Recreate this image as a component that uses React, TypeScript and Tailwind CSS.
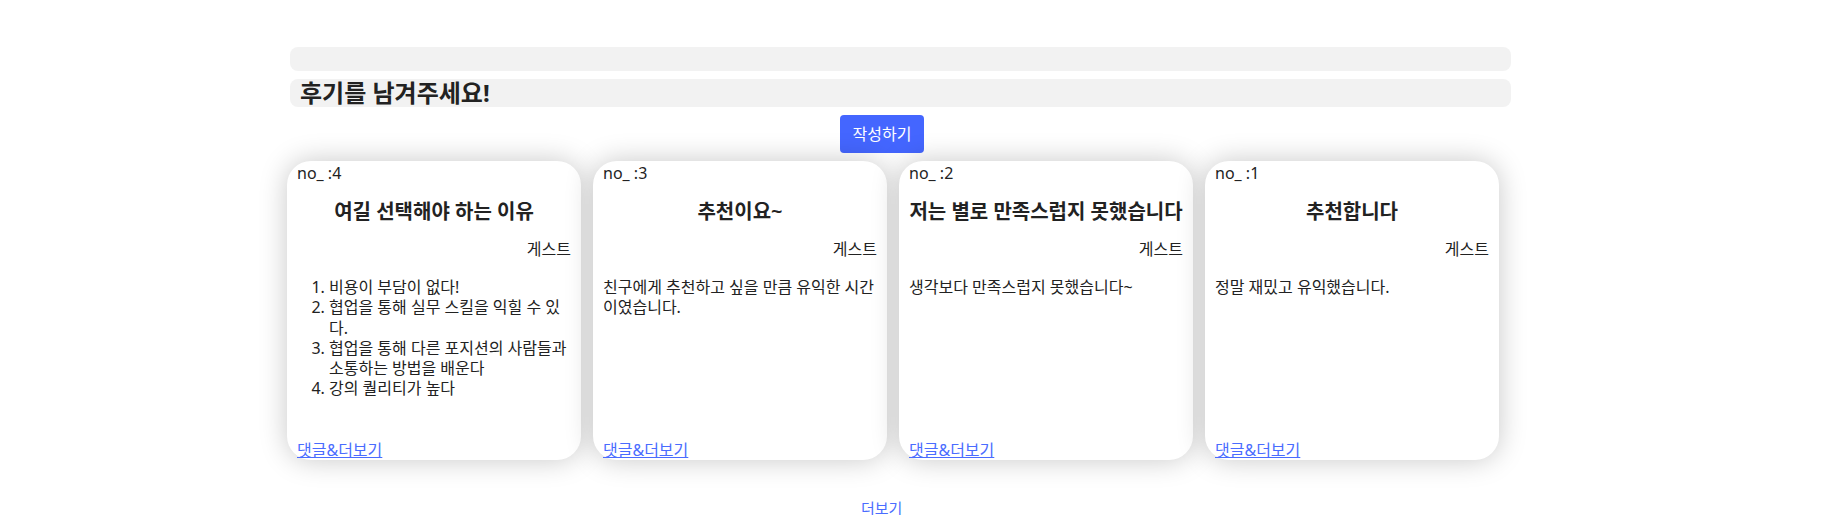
import React from 'react';

type Review = {
  no: number;
  title: string;
  author: string;
  body?: string;
  list?: string[];
};

const reviews: Review[] = [
  {
    no: 4,
    title: '여길 선택해야 하는 이유',
    author: '게스트',
    list: [
      '비용이 부담이 없다!',
      '협업을 통해 실무 스킬을 익힐 수 있다.',
      '협업을 통해 다른 포지션의 사람들과 소통하는 방법을 배운다',
      '강의 퀄리티가 높다',
    ],
  },
  { no: 3, title: '추천이요~', author: '게스트', body: '친구에게 추천하고 싶을 만큼 유익한 시간이였습니다.' },
  { no: 2, title: '저는 별로 만족스럽지 못했습니다', author: '게스트', body: '생각보다 만족스럽지 못했습니다~' },
  { no: 1, title: '추천합니다', author: '게스트', body: '정말 재밌고 유익했습니다.' },
];

function ReviewCard({ review }: { review: Review }) {
  return (
    <div className="flex h-[299px] w-[294px] flex-col rounded-[24px] bg-white px-[10px] pt-[2px] shadow-[0_0_28px_rgba(0,0,0,0.22)]">
      <div className="text-[16px] leading-[20px]">no_ :{review.no}</div>
      <h3 className="mt-[15px] text-center text-[20px] font-semibold leading-[28px] whitespace-nowrap">
        {review.title}
      </h3>
      <div className="mt-[13px] text-right text-[16px] leading-[20px]">{review.author}</div>
      {review.list ? (
        <ol className="mt-[18px] list-decimal pl-[32px] text-[16px] leading-[20.3px]">
          {review.list.map((item) => (
            <li key={item}>{item}</li>
          ))}
        </ol>
      ) : (
        <p className="mt-[18px] text-[16px] leading-[20.3px]">{review.body}</p>
      )}
      <a href="#" className="mt-auto text-[16px] leading-[20px] text-[#4a6cff] underline">
        댓글&더보기
      </a>
    </div>
  );
}

export default function App() {
  return (
    <div
      className="min-h-[515px] bg-white pt-[47px] text-[#222]"
      style={{ fontFamily: '"Noto Sans", "Noto Sans CJK KR", sans-serif' }}
    >
      <div className="ml-[290px] w-[1221px]">
        <div className="h-[24px] rounded-[8px] bg-[#f2f2f2]" />
        <h2 className="mt-[8px] h-[28px] rounded-[8px] bg-[#f2f2f2] pl-[10px] text-[24px] font-bold leading-[28px]">
          후기를 남겨주세요!
        </h2>
      </div>
      <button className="ml-[840px] mt-[8px] flex h-[38px] w-[84px] items-center justify-center rounded-[4px] bg-[#4466ff] text-[16px] text-white">
        작성하기
      </button>
      <div className="ml-[287px] mt-[8px] flex gap-[12px]">
        {reviews.map((r) => (
          <ReviewCard key={r.no} review={r} />
        ))}
      </div>
      <div className="ml-[861px] mt-[38px] text-[15px] leading-[20px] text-[#4a6cff]">더보기</div>
    </div>
  );
}
